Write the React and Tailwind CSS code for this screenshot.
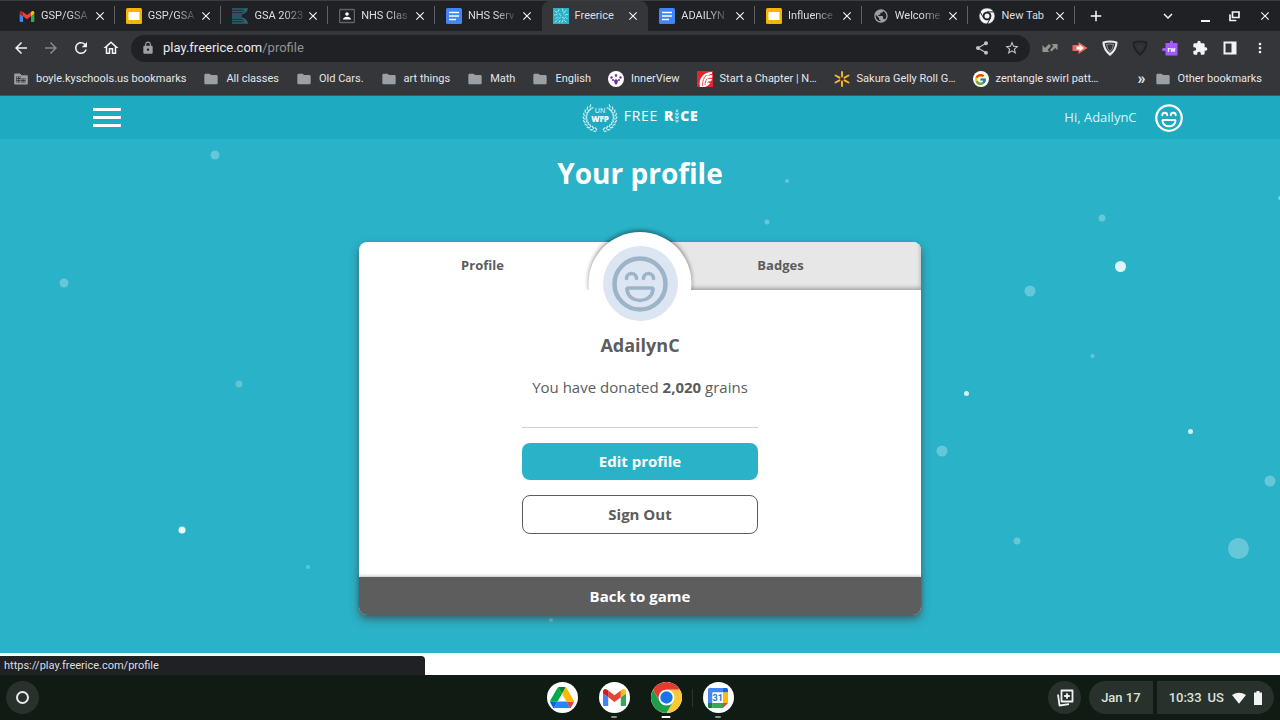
import React from "react";
import {
  MdArrowBack, MdArrowForward, MdRefresh, MdOutlineHome, MdLock, MdShare, MdStarBorder,
  MdExtension, MdMoreVert, MdFolder, MdClose, MdAdd, MdExpandMore, MdPublic,
} from "react-icons/md";
import { FcGoogle } from "react-icons/fc";

function Gmail({ className }) {
  return (
    <svg viewBox="52 42 88 66" className={className} aria-hidden="true">
      <path fill="#4285f4" d="M58 108h14V74L52 59v43c0 3.32 2.69 6 6 6" />
      <path fill="#34a853" d="M120 108h14c3.32 0 6-2.69 6-6V59l-20 15" />
      <path fill="#fbbc04" d="M120 48v26l20-15v-8c0-7.42-8.47-11.65-14.4-7.2" />
      <path fill="#ea4335" d="M72 74V48l24 18 24-18v26L96 92" />
      <path fill="#c5221f" d="M52 51v8l20 15V48l-5.6-4.2c-5.94-4.45-14.4-.22-14.4 7.2" />
    </svg>
  );
}

function Drive({ className }) {
  return (
    <svg viewBox="0 0 87.3 78" className={className} aria-hidden="true">
      <path fill="#0066da" d="m6.6 66.85 3.85 6.65c.8 1.4 1.95 2.5 3.3 3.3l13.75-23.8h-27.5c0 1.55.4 3.1 1.2 4.5z" />
      <path fill="#00ac47" d="m43.65 25-13.75-23.8c-1.35.8-2.5 1.9-3.3 3.3l-25.4 44a9.06 9.06 0 0 0 -1.2 4.5h27.5z" />
      <path fill="#ea4335" d="m73.55 76.8c1.35-.8 2.5-1.9 3.3-3.3l1.6-2.75 7.65-13.25c.8-1.4 1.2-2.95 1.2-4.5h-27.502l5.852 11.5z" />
      <path fill="#00832d" d="m43.65 25 13.75-23.8c-1.35-.8-2.9-1.2-4.5-1.2h-18.5c-1.6 0-3.15.45-4.5 1.2z" />
      <path fill="#2684fc" d="m59.8 53h-32.3l-13.75 23.8c1.35.8 2.9 1.2 4.5 1.2h50.8c1.6 0 3.15-.45 4.5-1.2z" />
      <path fill="#ffba00" d="m73.4 26.5-12.7-22c-.8-1.4-1.95-2.5-3.3-3.3l-13.75 23.8 16.15 28h27.45c0-1.55-.4-3.1-1.2-4.5z" />
    </svg>
  );
}

function Chrome({ className, mono }) {
  const blade = "M24 12H44.8A24 24 0 0 0 3.2 12L13.6 30A12 12 0 0 1 24 12Z";
  const c = mono ? ["#f1f3f4", "#f1f3f4", "#f1f3f4", "#f1f3f4", "#202124"] : ["#e33b2e", "#fcc934", "#1e9e4a", "#1a73e8", "#ffffff"];
  const edge = mono ? { stroke: "#202124", strokeWidth: 2 } : {};
  return (
    <svg viewBox="0 0 48 48" className={className} aria-hidden="true">
      <path d={blade} fill={c[0]} {...edge} />
      <path d={blade} fill={c[1]} transform="rotate(120 24 24)" {...edge} />
      <path d={blade} fill={c[2]} transform="rotate(240 24 24)" {...edge} />
      <circle cx="24" cy="24" r="12" fill={c[4]} />
      <circle cx="24" cy="24" r={mono ? 7.5 : 9.5} fill={c[3]} />
    </svg>
  );
}

function Calendar({ className }) {
  return (
    <svg viewBox="0 0 20 20" className={className} aria-hidden="true">
      <path fill="#4285f4" d="M1.5 0H15v4.5H4.5V15H0V1.500A1.500 1.500 0 0 1 1.500 0z" />
      <path fill="#1967d2" d="M15 0h3.500A1.500 1.500 0 0 1 20 1.500V4.500h-5z" />
      <path fill="#fbbc04" d="M15 4.500h5V15h-5z" />
      <path fill="#34a853" d="M4.500 15H15v5H4.500z" />
      <path fill="#188038" d="M0 15h4.500v5h-3A1.500 1.500 0 0 1 0 18.500z" />
      <path fill="#ea4335" d="M15 15h5l-5 5z" />
      <path fill="#fff" d="M4.500 4.500H15V15H4.500z" />
      <text x="9.700" y="13.200" textAnchor="middle" fontFamily="Roboto, sans-serif" fontWeight="700" fontSize="9" fill="#1a73e8">31</text>
    </svg>
  );
}

function Slides({ className }) {
  return (
    <svg viewBox="0 0 16 16" className={className} aria-hidden="true">
      <rect width="16" height="16" rx="1.500" fill="#f4b400" />
      <rect x="2.500" y="4" width="11" height="8" fill="#fff" />
    </svg>
  );
}

function Docs({ className }) {
  return (
    <svg viewBox="0 0 16 16" className={className} aria-hidden="true">
      <rect width="16" height="16" rx="1.500" fill="#4285f4" />
      <path d="M3 4.500h10M3 8h10M3 11.500h7" stroke="#fff" strokeWidth="1.700" />
    </svg>
  );
}

function Gsa({ className }) {
  return (
    <svg viewBox="0 0 16 16" className={className} fill="none" stroke="#2d6472" aria-hidden="true">
      <path d="M0 1h16M0 3.500h9q3 0 5-2M0 6h9q4-.5 6-4M0 8h10M0 10h9q4 .5 6 4M0 12.500h9q3 0 5 2M0 15h16" strokeWidth="1.300" />
    </svg>
  );
}

function Classroom({ className }) {
  return (
    <svg viewBox="0 0 16 16" className={className} aria-hidden="true">
      <rect x=".5" y="1.500" width="15" height="13" rx="1" fill="#202124" stroke="#5f6368" strokeWidth="1.500" />
      <circle cx="8" cy="6" r="1.800" fill="#fff" />
      <path d="M4 11.500c0-3.600 8-3.600 8 0z" fill="#fff" />
    </svg>
  );
}

function Rice({ className }) {
  return (
    <svg viewBox="0 0 16 16" className={className} aria-hidden="true">
      <rect width="16" height="16" fill="#2ab2c8" />
      <path d="M2 3l2 1.500M6 1.500l-1 2M9.500 1l.5 2.500M13.500 2l-2 2M1.500 7l2.500-.5M6 6l2 1.500M10.500 5.500l1-1.500M14.500 6.500l-2.500.5M3 10.500l1.500-1.500M7.500 9l-2 2M9.500 9.500l2 1M14 10.500l-1.500-1.500M2 14l2-1.500M6 14.500l1-2M10 12l-1 2.500M13 14l-1.500-1.500" stroke="#b5e8ef" strokeWidth=".9" strokeLinecap="round" />
    </svg>
  );
}

function InnerView({ className }) {
  return (
    <svg viewBox="0 0 16 16" className={className} aria-hidden="true">
      <circle cx="8" cy="8" r="8" fill="#fff" />
      <g fill="#6b2fa0">
        <circle cx="3.500" cy="6.500" r="1.200" /><circle cx="8" cy="4.500" r="1.300" /><circle cx="12.500" cy="6.500" r="1.200" />
        <circle cx="5" cy="9" r="1" /><circle cx="11" cy="9" r="1" />
        <path d="M6 9.500l2-1.500 2 1.500-.500 2.500L8 14l-1.500-2z" />
      </g>
    </svg>
  );
}

function Chapter({ className }) {
  return (
    <svg viewBox="0 0 16 16" className={className} aria-hidden="true">
      <rect width="16" height="16" fill="#e3262e" />
      <path d="M3 16C1 7 7 1 15 1v2C13 3 11 4 10 5c2-1 4-1 5.500-.5L15 7c-2-.5-4 0-5 1 2-.5 3.500-.5 5 0l-1 2.500c-1.500-.5-3 0-4 1 1.500-.3 2.500 0 3.500.5C12 14 10 15 8 16z" fill="#fff" />
      <path d="M5.500 15c0-5 1-8 4-11M8 14c0-2 .5-4 2-6" stroke="#e3262e" strokeWidth=".8" fill="none" />
    </svg>
  );
}

function Spark({ className }) {
  return (
    <svg viewBox="0 0 16 16" className={className} aria-hidden="true">
      <path d="M8 1v4.500M8 10.500V15M1.500 4.500l4 2.200M10.500 9.300l4 2.200M14.500 4.500l-4 2.200M5.500 9.300l-4 2.200" stroke="#fbb829" strokeWidth="1.900" strokeLinecap="round" />
    </svg>
  );
}

function ManagedFolder({ className }) {
  return (
    <svg viewBox="0 0 16 16" className={className} aria-hidden="true">
      <path d="M2 2.500h5l1.500 1.700H14q.8 0 .8.800v7.700q0 .8-.8.800H2q-.8 0-.8-.8V3.300q0-.8.8-.8z" fill="#9aa0a6" />
      <path d="M3.300 5.500h4.500V7.500h4.700v4H3.300z" fill="#35363a" />
      <path d="M4 6.500h3M4 8.500h8M4 10.500h8" stroke="#9aa0a6" strokeWidth=".9" strokeDasharray="1.300 .9" />
      <path d="M7.800 6v6" stroke="#9aa0a6" strokeWidth=".6" />
    </svg>
  );
}

function Face({ className }) {
  return (
    <svg viewBox="0 0 56 56" className={className} fill="none" stroke="currentColor" strokeLinecap="round" strokeLinejoin="round" aria-hidden="true">
      <circle cx="28" cy="28" r="25.500" strokeWidth="4.500" />
      <path strokeWidth="3.600" d="M14.500 22.500a5 5 0 0 1 10 0M31.500 22.500a5 5 0 0 1 10 0" />
      <path strokeWidth="3.600" d="M16.500 32h23q2 0 1.500 2c-1 7-7 10.500-13 10.500s-12-3.500-13-10.500q-.500-2 1.500-2z" />
    </svg>
  );
}

function Wreath({ className }) {
  const angles = [-52, -38, -24, -10, 4, 18, 32, 46, 60, 74];
  return (
    <svg viewBox="0 0 36 32" className={className} aria-hidden="true">
      {[1, -1].map((side) => (
        <g key={side} transform={side === 1 ? undefined : "translate(36 0) scale(-1 1)"}>
          {angles.map((a) => {
            const t = (a * Math.PI) / 180;
            const x = 18 + 15 * Math.cos(t);
            const y = 15.5 + 13 * Math.sin(t);
            return (
              <g key={a} transform={`translate(${x} ${y}) rotate(${a - 90})`} fill="#c8eef4">
                <ellipse cx="1" cy="1" rx="2" ry=".7" transform="rotate(28)" />
                <ellipse cx="1" cy="-1" rx="2" ry=".7" transform="rotate(-28)" />
              </g>
            );
          })}
        </g>
      ))}
      <text x="18" y="11" textAnchor="middle" fontFamily="Open Sans, sans-serif" fontSize="7" fill="#fff">UN</text>
      <text x="18" y="20" textAnchor="middle" fontFamily="Open Sans, sans-serif" fontSize="8" fontWeight="800" fill="#fff">WFP</text>
    </svg>
  );
}

const tabs = [
  { label: "GSP/GSA", Icon: Gmail, icon: "h-[11px] w-4 shrink-0" },
  { label: "GSP/GSA", Icon: Slides },
  { label: "GSA 2023", Icon: Gsa },
  { label: "NHS Clas", Icon: Classroom },
  { label: "NHS Serv", Icon: Docs, divider: false },
  { label: "Freerice", Icon: Rice, active: true, divider: false },
  { label: "ADAILYN", Icon: Docs },
  { label: "Influence", Icon: Slides },
  { label: "Welcome", Icon: MdPublic, icon: "size-4 shrink-0 text-[#9aa0a6]" },
  { label: "New Tab", Icon: (p) => <Chrome {...p} mono />, full: true },
];

const bookmarks = [
  { label: "boyle.kyschools.us bookmarks", Icon: ManagedFolder },
  { label: "All classes" },
  { label: "Old Cars." },
  { label: "art things" },
  { label: "Math" },
  { label: "English" },
  { label: "InnerView", Icon: InnerView },
  { label: "Start a Chapter | N…", Icon: Chapter },
  { label: "Sakura Gelly Roll G…", Icon: Spark },
  { label: "zentangle swirl patt…", Icon: () => (
    <span className="flex size-4 items-center justify-center rounded-full bg-white"><FcGoogle className="size-[13px]" /></span>
  ) },
];

const dots = [
  [215, 16, 4.5, 0.28], [64, 144, 4.5, 0.28], [239, 245, 3.5, 0.25], [182, 391, 3.5, 0.9],
  [308, 428, 2, 0.25], [787, 42, 2, 0.28], [767, 83, 2.5, 0.28], [1102, 79, 3.5, 0.28],
  [1120.5, 127.5, 5.5, 0.85], [1030, 152, 5.5, 0.28], [1092.5, 217, 2, 0.28], [966.5, 254.5, 2.5, 0.8],
  [1190.5, 292.5, 2.5, 0.8], [942, 312, 5.5, 0.28], [1270, 342, 5.5, 0.28], [1017, 402, 3.5, 0.28],
  [1238.5, 409.5, 10.5, 0.28], [551, 481, 2, 0.3], [1280, 59, 2, 0.4],
];

function Tab({ label, Icon, icon, active, full, divider = true }) {
  return (
    <div className={`relative flex min-w-0 flex-1 items-center pl-[11px] ${active ? "rounded-t-lg bg-[#35363a]" : ""}`}>
      <button className="flex min-w-0 flex-1 items-center gap-[6px]">
        <Icon className={icon || "size-4 shrink-0"} />
        <span className={`whitespace-nowrap text-left ${active || full ? "" : "[mask-image:linear-gradient(to_right,black_60%,transparent_110%)]"}`}>{label}</span>
      </button>
      <button aria-label={`Close ${label}`} className="mr-2 text-[#f1f3f4]"><MdClose className="size-3.5" /></button>
      {divider && <span className="absolute right-0 top-[5px] h-[18px] w-px bg-[#5f6368]" />}
    </div>
  );
}

function Browser() {
  return (
    <header className="shrink-0 border-b border-[#505155] bg-[#35363a] text-[11px] text-[#e4e6e9]">
      <div className="flex h-[31px] items-stretch border-t border-[#3c3d41] bg-[#202124] pl-2 text-[#dcdee2]">
        <nav aria-label="Tabs" className="flex w-[83.9%]">
          {tabs.map((t, i) => <Tab key={i} {...t} />)}
        </nav>
        <button aria-label="New tab" className="ml-3 text-white"><MdAdd className="size-[18px]" /></button>
        <div className="flex flex-1 items-center justify-end gap-4 pr-2 text-[#f1f3f4]">
          <button aria-label="Search tabs" className="mr-2"><MdExpandMore className="size-[18px]" /></button>
          <button aria-label="Minimize" className="flex h-4 items-end"><span className="mb-0.5 h-0.5 w-[9px] bg-[#f1f3f4]" /></button>
          <button aria-label="Restore">
            <svg viewBox="0 0 16 16" className="size-4" fill="none" stroke="currentColor" strokeWidth="1.700" aria-hidden="true"><path d="M6.500 4h6.500v5.500h-6.500zM4.500 7H4v5.500h5.500V12" /></svg>
          </button>
          <button aria-label="Close window"><MdClose className="size-3.5" /></button>
        </div>
      </div>

      <div className="flex h-[34px] items-center px-3">
        <div className="flex w-[119px] gap-3 text-[#f1f3f4]">
          <button aria-label="Back"><MdArrowBack className="size-[18px]" /></button>
          <button aria-label="Forward" className="text-[#85878a]"><MdArrowForward className="size-[18px]" /></button>
          <button aria-label="Reload"><MdRefresh className="size-[18px]" /></button>
          <button aria-label="Home"><MdOutlineHome className="size-[18px]" /></button>
        </div>
        <div className="flex h-[27px] flex-1 items-center rounded-full bg-[#202124] pl-2.5 pr-2.5">
          <MdLock className="size-3.5 text-[#9aa0a6]" />
          <div className="ml-2 flex-1 text-[13px]"><span className="text-[#e8eaed]">play.freerice.com</span><span className="text-[#8f9397]">/profile</span></div>
          <div className="flex gap-3.5 text-[#c0c3c7]">
            <button aria-label="Share"><MdShare className="size-4" /></button>
            <button aria-label="Bookmark"><MdStarBorder className="size-4" /></button>
          </div>
        </div>
        <div className="ml-3 flex items-center gap-3.5 text-[#f1f3f4]">
          <button aria-label="Swap">
            <svg viewBox="0 0 16 16" className="size-4" aria-hidden="true"><path d="M.5 5v7h7L5.500 10 9 6 7 4 3 8zM15.500 10V4h-6l2 2L8 10l1.500 1.500L13 8z" fill="#96958f" /></svg>
          </button>
          <button aria-label="Record">
            <svg viewBox="0 0 16 16" className="size-4" aria-hidden="true"><path d="M.5 5h6V2l9 6-9 6v-3h-6z" fill="#f0665f" /><path d="M4.500 6.500h3V4.500L12 8l-4.500 3.500v-2h-3z" fill="#fff" /></svg>
          </button>
          <button aria-label="Shield">
            <svg viewBox="0 0 16 16" className="size-4" fill="none" stroke="#e8eaed" strokeLinejoin="round" aria-hidden="true"><path strokeWidth="2.200" d="M1.500 2.500Q8 .5 14.500 2.500 14 10 8 14.500 2 10 1.500 2.500z" /><path d="M4.500 4.500Q8 3.500 11.500 4.500 11 9 8 11.500 5 9 4.500 4.500z" strokeWidth=".5" /></svg>
          </button>
          <button aria-label="Guard">
            <svg viewBox="0 0 16 16" className="size-4" fill="none" stroke="#202124" strokeLinejoin="round" aria-hidden="true"><path strokeWidth="2.200" d="M1.500 2.500Q8 .5 14.500 2.500 14 10 8 14.500 2 10 1.500 2.500z" /><path d="M4.500 4.500Q8 3.500 11.500 4.500 11 9 8 11.500 5 9 4.500 4.500z" strokeWidth=".5" /></svg>
          </button>
          <button aria-label="Read and write">
            <svg viewBox="0 0 16 16" className="size-4" aria-hidden="true"><path d="M3.500 3H8V2a1.500 1.500 0 0 1 3 0v1h4.500v12.500h-12V11H1.500a1.500 1.500 0 0 1 0-3h2z" fill="#a259ff" /><text x="9.500" y="11.500" textAnchor="middle" fontFamily="Roboto, sans-serif" fontWeight="700" fontSize="7" fill="#fff">rw</text></svg>
          </button>
          <button aria-label="Extensions"><MdExtension className="size-4" /></button>
          <button aria-label="Side panel">
            <svg viewBox="0 0 16 16" className="size-4" aria-hidden="true"><path d="M1.500 1.500h13v13h-13zM3.500 3.500v9h6v-9z" fillRule="evenodd" fill="currentColor" /></svg>
          </button>
          <button aria-label="Menu"><MdMoreVert className="size-4" /></button>
        </div>
      </div>

      <nav aria-label="Bookmarks" className="flex h-[30px] items-center gap-[17px] whitespace-nowrap pb-0.5 pl-[13px] pr-[18px]">
        {bookmarks.map(({ label, Icon }) => (
          <a key={label} href="#" className="flex items-center gap-[7px]">
            {Icon ? <Icon className="size-4" /> : <MdFolder className="size-4 text-[#9aa0a6]" />}
            {label}
          </a>
        ))}
        <button aria-label="More bookmarks" className="ml-auto"><span className="text-base font-bold">»</span></button>
        <a href="#" className="-ml-2 flex items-center gap-[7px]"><MdFolder className="size-4 text-[#9aa0a6]" />Other bookmarks</a>
      </nav>
    </header>
  );
}

function SiteHeader() {
  return (
    <div className="grid h-[43px] shrink-0 grid-cols-3 items-center bg-[#1eabc1] px-[7.3%] text-white">
      <button aria-label="Open menu" className="flex w-7 flex-col gap-[5px]">
        <span className="h-[3px] bg-white" /><span className="h-[3px] bg-white" /><span className="h-[3px] bg-white" />
      </button>
      <a href="#" className="flex items-center justify-center gap-[6px]">
        <Wreath className="h-8 w-9" />
        <span className="mb-1 flex items-center text-sm tracking-wider">
          FREE<b className="ml-1.5 font-extrabold">R</b>
          <svg viewBox="0 0 6 14" className="h-3.5 w-[6px]" fill="#a8e0ea" aria-hidden="true">
            <path d="M3 0l1.500 2L3 3.500 1.500 2zM1 3.500l2 1 2-1-.5 2.500L3 7 1.500 6zM1 7l2 1 2-1-.5 2.500-1.500 1-1.500-1zM1 10.500l2 1 2-1-.5 2L3 14l-1.500-1.500z" />
          </svg>
          <b className="font-extrabold">CE</b>
        </span>
      </a>
      <a href="#" className="mr-1 flex items-center justify-end gap-[18px] text-[13px] text-[#d9f3f7]">
        Hi, AdailynC
        <Face className="size-7 text-white" />
      </a>
    </div>
  );
}

function ProfileCard() {
  return (
    <div className="relative w-full max-w-[562px] rounded-lg bg-white text-[#5c5c5c] shadow-[0_4px_8px_rgba(70,60,60,0.7)]">
      <div className="flex h-12 text-[13px] font-bold">
        <button className="w-1/2 pr-[34px]">Profile</button>
        <button className="w-1/2 rounded-tr-lg bg-[#e7e7e7] shadow-[inset_-2px_-4px_4px_-2px_rgba(0,0,0,0.3)]">Badges</button>
      </div>
      <div className="absolute left-1/2 top-[-10px] size-[103px] -translate-x-1/2 rounded-full bg-white shadow-[0_-2px_4px_rgba(0,0,0,0.4)]" />
      <div className="relative flex flex-col items-center bg-white pb-[43px]">
        <div className="-mt-11 flex size-[75px] items-center justify-center rounded-full bg-[#dce6f3] text-[#9db3c8]">
          <Face className="size-14" />
        </div>
        <h2 className="mt-[10px] text-lg font-bold">AdailynC</h2>
        <p className="mt-4 text-[15px] leading-6">You have donated <b>2,020</b> grains</p>
        <div className="mt-7 flex w-[236px] flex-col gap-[15px] border-t border-[#cfcfcf] pt-[15px]">
          <button className="h-[37px] rounded-lg bg-[#2ab2c8] text-[15px] font-bold text-white">Edit profile</button>
          <button className="h-[39px] rounded-lg border border-[#5c5c5c] text-[15px] font-bold">Sign Out</button>
        </div>
      </div>
      <button className="relative h-[38px] w-full rounded-b-lg bg-[#5d5d5d] text-[15px] font-bold text-white shadow-[0_-1px_3px_rgba(0,0,0,0.25)]">Back to game</button>
    </div>
  );
}

function Shelf() {
  const apps = [
    { name: "Drive", icon: <Drive className="w-[24px]" /> },
    { name: "Gmail", icon: <Gmail className="w-[23px]" />, mark: "w-1.5 bg-[#8a918d]" },
    { name: "Chrome", icon: <Chrome className="size-[31px]" />, mark: "w-[9px] bg-white" },
    { name: "Calendar", icon: <Calendar className="size-5" />, mark: "w-1.5 bg-[#8a918d]" },
  ];
  return (
    <footer className="grid h-[45px] shrink-0 grid-cols-[1fr_auto_1fr] items-center bg-[#101b14] px-1.5 text-[#e8eaed]">
      <button aria-label="Launcher" className="flex size-[33px] items-center justify-center rounded-full bg-[#28312b]">
        <span className="size-[13px] rounded-full border-2 border-[#e8eaed]" />
      </button>
      <div className="flex h-full items-center gap-[21px]">
        {apps.map((a) => (
          <button key={a.name} aria-label={a.name} className="relative flex h-full items-center">
            <span className="flex size-[31px] items-center justify-center overflow-hidden rounded-full bg-white">{a.icon}</span>
            {a.mark && <span className={`absolute bottom-[2px] left-1/2 h-0.5 -translate-x-1/2 rounded ${a.mark}`} />}
            {a.name === "Calendar" && <span className="absolute -left-[11px] h-[18px] w-px bg-[#2b352f]" />}
          </button>
        ))}
      </div>
      <div className="flex items-center justify-end text-[13px] font-medium text-[#dde1de]">
        <button aria-label="Captures" className="mr-2 flex size-[33px] items-center justify-center rounded-full bg-[#28312b]">
          <svg viewBox="0 0 18 18" className="size-[18px]" fill="none" stroke="#f1f3f4" strokeWidth="1.800" strokeLinejoin="round" aria-hidden="true">
            <path d="M5.500 1.500h11v11h-11zM11 4.200v5.600M8.200 7h5.600M2 5.500L3.500 16.500 13 15.200" />
          </svg>
        </button>
        <button className="mr-1 h-[33px] rounded-l-full rounded-r bg-[#28312b] px-3">Jan 17</button>
        <button className="flex h-[33px] items-center rounded-l rounded-r-full bg-[#28312b] px-3">
          10:33<span className="ml-1.5">US</span>
          <svg viewBox="0 0 16 13" className="ml-2 h-3 w-3.5" aria-hidden="true"><path d="M0 3Q8-2 16 3L8 13z" fill="#f1f3f4" /></svg>
          <svg viewBox="0 0 8 14" className="ml-2 h-3.5 w-2" aria-hidden="true"><path d="M2.500 0h3v1.500H8V14H0V1.500h2.500z" fill="#f1f3f4" /></svg>
        </button>
      </div>
    </footer>
  );
}

export default function App() {
  return (
    <div className="flex min-h-screen flex-col bg-white font-[Roboto,sans-serif]">
      <Browser />
      <div className="flex flex-1 flex-col font-['Open_Sans',sans-serif]">
        <SiteHeader />
        <main className="relative flex flex-1 flex-col items-center bg-[#2ab2c8] px-4 pb-[38px]">
          <svg className="absolute inset-0 h-full w-full" fill="#fff" aria-hidden="true">
            {dots.map(([x, y, r, o]) => (
              <circle key={`${x}-${y}`} cx={`${(x / 1280) * 100}%`} cy={y} r={r} opacity={o} />
            ))}
          </svg>
          <h1 className="relative mb-[51px] mt-4 text-[28px] font-bold leading-9 text-white">Your profile</h1>
          <ProfileCard />
        </main>
      </div>
      <div className="flex h-[22px] shrink-0 items-end">
        <div className="h-[19px] w-[33.2%] rounded-tr bg-[#202124] pl-1 text-[11px] leading-[19px] text-[#dcdee2]">https://play.freerice.com/profile</div>
      </div>
      <Shelf />
    </div>
  );
}
